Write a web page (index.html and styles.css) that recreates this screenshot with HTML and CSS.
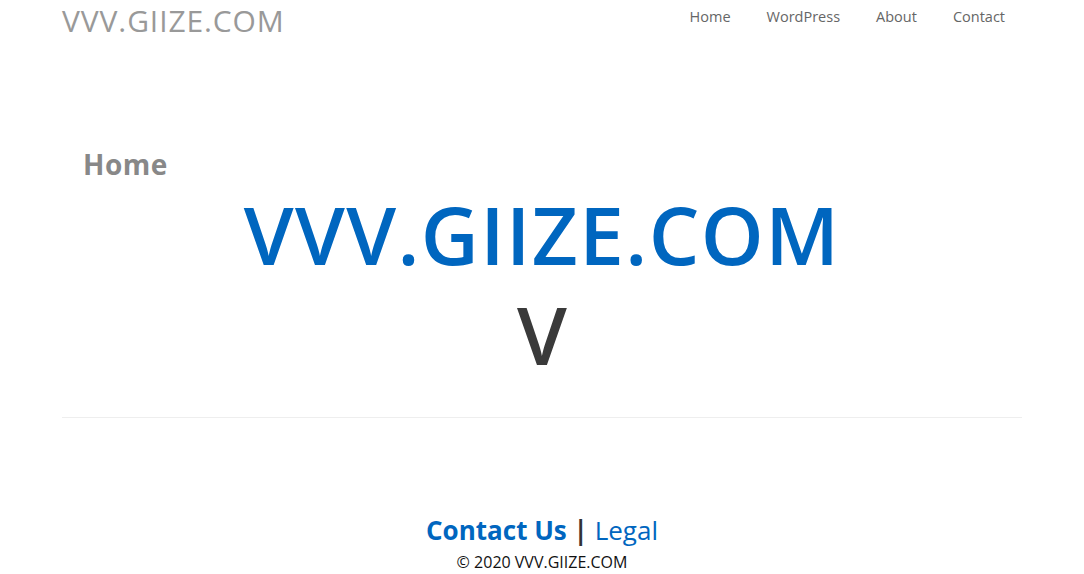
FILE: index.html
```html
<!DOCTYPE html>
<html lang="en">
<head>
<meta charset="utf-8">
<title>VVV.GIIZE.COM</title>
<link rel="stylesheet" href="styles.css">
</head>
<body>
<header class="site-header">
  <div class="container header-inner">
    <a class="logo" href="#">VVV.GIIZE.COM</a>
    <nav class="nav">
      <a href="#">Home</a>
      <a href="#">WordPress</a>
      <a href="#">About</a>
      <a href="#">Contact</a>
    </nav>
  </div>
</header>
<main class="container main">
  <h2 class="page-title">Home</h2>
  <h1 class="hero-title">VVV.GIIZE.COM</h1>
  <div class="hero-sub">V</div>
  <hr class="divider">
</main>
<footer class="footer">
  <div class="footer-links"><a class="contact" href="#">Contact Us</a> <span class="sep">|</span> <a class="legal" href="#">Legal</a></div>
  <div class="copyright">© 2020 VVV.GIIZE.COM</div>
</footer>
</body>
</html>
```
FILE: styles.css
```css
html, body {
  margin: 0;
  padding: 0;
  background: #fff;
  font-family: "Open Sans", "Noto Sans", sans-serif;
}
a { text-decoration: none; }
.container {
  width: 960px;
  margin: 0 auto;
}
.header-inner {
  display: flex;
  justify-content: space-between;
  align-items: flex-start;
  height: 40px;
}
.logo {
  display: block;
  color: #999;
  font-size: 30px;
  line-height: 41px;
  letter-spacing: 0.9px;
}
.nav {
  display: flex;
  gap: 36px;
  padding-right: 17px;
  padding-top: 7px;
}
.nav a {
  color: #666;
  font-size: 14.5px;
  line-height: 20px;
}
.main {
  padding-top: 106px;
}
.page-title {
  margin: 0 0 0 21px;
  color: #888;
  font-size: 28px;
  font-weight: 700;
  line-height: 36px;
  letter-spacing: 0.5px;
}
.hero-title {
  margin: 0;
  text-align: center;
  color: #0066bf;
  font-size: 80px;
  font-weight: 600;
  line-height: 104px;
  letter-spacing: 1.4px;
}
.hero-sub {
  text-align: center;
  color: #3a3a3a;
  font-size: 80px;
  font-weight: 600;
  line-height: 96px;
}
.divider {
  border: 0;
  border-top: 1px solid #eee;
  margin: 35px 0 0;
}
.footer {
  text-align: center;
  padding-top: 96px;
}
.footer-links {
  font-size: 26px;
  line-height: 32px;
}
.contact { color: #0066bf; font-weight: 700; }
.sep { color: #333; font-weight: 700; }
.legal { color: #0066bf; }
.copyright {
  color: #111;
  font-size: 16px;
  line-height: 22px;
  margin-top: 5px;
}
```
